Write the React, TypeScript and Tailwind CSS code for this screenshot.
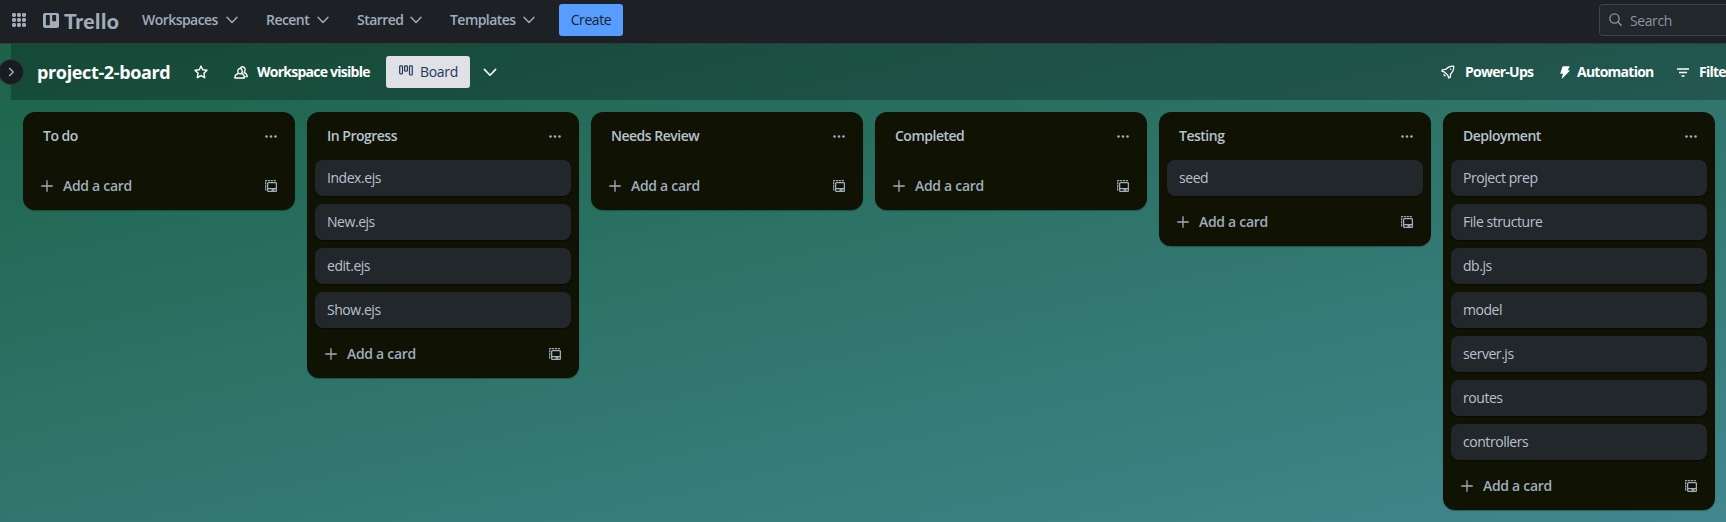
type IconProps = { className?: string };

const columns: { title: string; cards: string[] }[] = [
  { title: 'To do', cards: [] },
  { title: 'In Progress', cards: ['Index.ejs', 'New.ejs', 'edit.ejs', 'Show.ejs'] },
  { title: 'Needs Review', cards: [] },
  { title: 'Completed', cards: [] },
  { title: 'Testing', cards: ['seed'] },
  {
    title: 'Deployment',
    cards: ['Project prep', 'File structure', 'db.js', 'model', 'server.js', 'routes', 'controllers'],
  },
];

function Chevron({ className = '' }: IconProps) {
  return (
    <svg viewBox="0 0 12 8" fill="none" stroke="currentColor" strokeWidth="1.4" strokeLinecap="round" strokeLinejoin="round" className={className}>
      <path d="M1 1.2 6 6.4l5-5.2" />
    </svg>
  );
}

function AppsIcon() {
  return (
    <svg viewBox="0 0 14 14" fill="currentColor" className="h-3.5 w-3.5 shrink-0">
      {[0, 5, 10].map((y) => [0, 5, 10].map((x) => <rect key={`${x}-${y}`} x={x} y={y} width="4" height="4" rx="1.4" />))}
    </svg>
  );
}

function TrelloMark() {
  return (
    <svg viewBox="0 0 16 15" className="h-[15px] w-4 shrink-0">
      <path
        fill="currentColor"
        fillRule="evenodd"
        d="M2 0h12a2 2 0 0 1 2 2v11a2 2 0 0 1-2 2H2a2 2 0 0 1-2-2V2a2 2 0 0 1 2-2Zm.9 2.5v9.2c0 .3.2.5.5.5h2.9c.3 0 .5-.2.5-.5V2.5c0-.3-.2-.5-.5-.5H3.4c-.3 0-.5.2-.5.5Zm6.3 0v5.2c0 .3.2.5.5.5h2.9c.3 0 .5-.2.5-.5V2.5c0-.3-.2-.5-.5-.5H9.7c-.3 0-.5.2-.5.5Z"
      />
    </svg>
  );
}

function StarIcon() {
  return (
    <svg viewBox="0 0 14 14" fill="none" stroke="currentColor" strokeWidth="1.4" strokeLinejoin="round" className="h-3.5 w-3.5 shrink-0">
      <path d="m7 1.1 1.7 3.7 4.3.5-3.1 2.9.8 4.5L7 10.6l-3.7 2.1.8-4.5L1 5.3l4.3-.5Z" />
    </svg>
  );
}

function MembersIcon() {
  return (
    <svg viewBox="0 0 14 13" fill="none" stroke="currentColor" strokeWidth="1.3" strokeLinejoin="round" strokeLinecap="round" className="h-[13px] w-3.5 shrink-0">
      <ellipse cx="6" cy="5.2" rx="2.2" ry="2.7" />
      <path d="M3.9 7.7C1.900 8.400.8 9.600.8 12h9.600c0-2.400-.8-3.600-2.300-4.300" />
      <path d="M6.700 1.400c2-1.500 4.700 0 4.400 2.400-.1 1.200-.5 2-1.100 2.600 2 .8 3.200 2 3.200 4.300h-1.400" />
    </svg>
  );
}

function BoardIcon() {
  return (
    <svg viewBox="0 0 14 11" fill="none" stroke="currentColor" strokeWidth="1.2" className="mb-[3px] h-[11px] w-3.5 shrink-0">
      <rect x=".7" y=".8" width="2.8" height="8" rx=".8" />
      <rect x="5.6" y=".8" width="2.8" height="5.3" rx=".8" />
      <rect x="10.5" y=".8" width="2.8" height="9.2" rx=".8" />
    </svg>
  );
}

function RocketIcon() {
  return (
    <svg viewBox="0 0 14 14" fill="none" stroke="currentColor" strokeWidth="1.3" strokeLinejoin="round" strokeLinecap="round" className="h-3.5 w-3.5 shrink-0">
      <path d="M12.700 1.100C8.800.8 6.700 2.200 4.700 4.300L1.500 4.700.9 6.200l2.700 1 3.100 2.900 1 2.900 1.600-.9.3-3.200c2.200-2 3.400-4.200 3.100-7.800Z" />
      <path d="M9.600 4.200h.1M2.900 9.700 4 10.800" />
    </svg>
  );
}

function BoltIcon() {
  return (
    <svg viewBox="0 0 10 13" fill="currentColor" className="h-[13px] w-2.5 shrink-0">
      <path d="M3.200.2h5.900c.4 0 .6.400.4.700L7.700 4.200h1.400c.5 0 .7.500.4.900L2.300 12.600c-.3.300-.7.100-.6-.300L3 7.800H.9c-.4 0-.7-.4-.5-.8L2.500.7c.1-.3.400-.5.700-.5Z" />
    </svg>
  );
}

function FilterIcon() {
  return (
    <svg viewBox="0 0 12 9" fill="none" stroke="currentColor" strokeWidth="1.3" className="h-[9px] w-3 shrink-0">
      <path d="M0 1h12M2 4.500h8M4.500 8h3" />
    </svg>
  );
}

function SearchIcon() {
  return (
    <svg viewBox="0 0 13 13" fill="none" stroke="currentColor" strokeWidth="1.4" strokeLinecap="round" className="mb-0.5 h-[13px] w-[13px] shrink-0">
      <circle cx="5.5" cy="5.5" r="4.6" />
      <path d="m9 9 3.2 3.2" />
    </svg>
  );
}

function TemplateIcon() {
  return (
    <svg viewBox="0 0 12 12" fill="none" stroke="currentColor" strokeWidth="1.3" className="h-3 w-3">
      <path strokeDasharray="2.2 .8" d="M.6 10.5V.6h10.4" />
      <rect x="2.6" y="2.6" width="8.8" height="8.8" rx="1" />
      <path d="M2.6 8.6h8.8M6.500 10h3" />
    </svg>
  );
}

function NavItem({ label, width }: { label: string; width: string }) {
  return (
    <div className={`flex shrink-0 items-center justify-between ${width}`}>
      <span>{label}</span>
      <Chevron className="h-2 w-3" />
    </div>
  );
}

export default function App() {
  return (
    <div
      className="flex h-[522px] w-full flex-col overflow-hidden bg-[linear-gradient(167deg,#1a6145,#42878e)] text-sm leading-5 text-[#9fadbc]"
      style={{ fontFamily: '"Segoe UI", "Open Sans", "Noto Sans", sans-serif' }}
    >
      <nav className="flex h-11 shrink-0 items-center border-b border-[#34383d] bg-[#1d2125] pb-[3px] pl-3 font-semibold whitespace-nowrap tracking-[-0.55px]">
        <AppsIcon />
        <div className="ml-[17px] flex w-[99px] shrink-0 items-center gap-[5px]">
          <TrelloMark />
          <span className="pt-px font-['Lato'] text-[21px] leading-5 font-black tracking-[0.5px]">Trello</span>
        </div>
        <div className="flex gap-7">
          <NavItem label="Workspaces" width="w-24" />
          <NavItem label="Recent" width="w-[63px]" />
          <NavItem label="Starred" width="w-[65px]" />
          <NavItem label="Templates" width="w-[85px]" />
        </div>
        <button className="ml-6 h-8 w-16 shrink-0 rounded-[3px] bg-[#579dff] font-medium tracking-[-0.4px] text-[#1d2125]">Create</button>
        <div className="ml-auto flex h-8 w-[127px] items-center gap-2 rounded-l-[4px] border border-r-0 border-[#3a444e] bg-[#22272b] pl-[9px] font-normal tracking-[-0.4px] text-[#8696a7]">
          <SearchIcon />
          <span className="pt-0.5">Search</span>
        </div>
      </nav>

      <header className="relative ml-[11px] flex h-14 shrink-0 items-center bg-black/25 pl-[26px] font-bold whitespace-nowrap text-white">
        <button className="absolute top-[15px] -left-[13px] flex h-[26px] w-[26px] items-center justify-center rounded-full border border-[#2c3a38] bg-[#161c1f] text-[#b6c2cf]">
          <Chevron className="h-[6px] w-[9px] -rotate-90" />
        </button>
        <h1 className="w-[157px] shrink-0 text-lg tracking-[-0.36px]">project-2-board</h1>
        <StarIcon />
        <div className="ml-[26px] flex w-[152px] shrink-0 items-center gap-[9px] tracking-[-0.75px]">
          <MembersIcon />
          <span>Workspace visible</span>
        </div>
        <button className="flex h-8 w-[84px] shrink-0 items-center gap-[7px] rounded-[3px] bg-[#dfe1e6] pl-[13px] font-normal text-[#253858]">
          <BoardIcon />
          <span className="tracking-[-0.3px]">Board</span>
        </button>
        <Chevron className="ml-[13px] h-[9px] w-3.5" />
        <div className="ml-auto flex items-center tracking-[-0.75px]">
          <div className="flex w-[119px] shrink-0 items-center gap-2.5">
            <RocketIcon />
            <span>Power-Ups</span>
          </div>
          <div className="flex w-[117px] shrink-0 items-center gap-[7px]">
            <BoltIcon />
            <span>Automation</span>
          </div>
          <div className="flex w-[49px] shrink-0 items-center gap-2.5">
            <FilterIcon />
            <span>Filters</span>
          </div>
        </div>
      </header>

      <main className="flex items-start gap-3 pt-3 pl-[23px]">
        {columns.map((column) => (
          <section key={column.title} className="w-[272px] shrink-0 rounded-xl bg-[#101204] px-2 shadow-[0_1px_1px_#0304044d]">
            <div className="flex h-12 items-center justify-between pr-2.5 pl-3">
              <h2 className="font-semibold tracking-[-0.5px] text-[#b6c2cf]">{column.title}</h2>
              <svg viewBox="0 0 12 3" fill="currentColor" className="h-[3px] w-3">
                <circle cx="1.5" cy="1.5" r="1.3" />
                <circle cx="6" cy="1.5" r="1.3" />
                <circle cx="10.5" cy="1.5" r="1.3" />
              </svg>
            </div>
            <ul className="flex flex-col gap-2">
              {column.cards.map((card) => (
                <li key={card} className="flex h-9 items-center rounded-lg bg-[#22272b] px-3 tracking-[-0.45px] text-[#b6c2cf] shadow-[0_1px_1px_#03040480]">
                  {card}
                </li>
              ))}
            </ul>
            <div className="flex h-[50px] items-center pt-0.5 pr-2.5 pl-2.5 font-semibold">
              <svg viewBox="0 0 12 12" stroke="currentColor" strokeWidth="1.3" strokeLinecap="round" className="h-3 w-3">
                <path d="M6 .7v10.6M.7 6h10.6" />
              </svg>
              <span className="mr-auto ml-2.5 tracking-[-0.3px]">Add a card</span>
              <TemplateIcon />
            </div>
          </section>
        ))}
      </main>
    </div>
  );
}
